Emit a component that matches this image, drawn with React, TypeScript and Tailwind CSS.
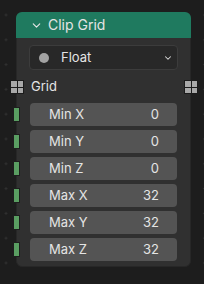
import { ChevronDown } from "lucide-react";

const fields = [
  { label: "Min X", value: "0" },
  { label: "Min Y", value: "0" },
  { label: "Min Z", value: "0" },
  { label: "Max X", value: "32" },
  { label: "Max Y", value: "32" },
  { label: "Max Z", value: "32" },
];

function GridSocket() {
  return (
    <div className="grid h-[14px] w-[14px] grid-cols-2 gap-px bg-[#1b1b1b] p-px">
      <span className="bg-[#a8a8a8]" />
      <span className="bg-[#a8a8a8]" />
      <span className="bg-[#a8a8a8]" />
      <span className="bg-[#a8a8a8]" />
    </div>
  );
}

export default function App() {
  return (
    <div className="h-[284px] w-[204px] bg-[#1d1d1d] bg-[radial-gradient(circle,#303030_1px,transparent_1.2px)] bg-[length:24.8px_24.8px] bg-[position:-6.4px_2.6px] pl-[16px] pt-[12px] font-['Inter','Liberation_Sans',sans-serif] text-[13px] text-[#e4e4e4]">
      <div className="w-[175px] rounded-[6px] border border-[#272727] bg-[#303030] pb-[5px]">
        <div className="-m-px flex h-[26px] items-center gap-[5px] rounded-t-[6px] bg-[#1f7a5f] pl-[14px] text-[14px]">
          <ChevronDown size={13} strokeWidth={2} className="text-[#e8e8e8]" />
          <span className="leading-none">Clip Grid</span>
        </div>

        <div className="mx-[12px] mt-[8px] flex h-[25px] items-center rounded-[4px] border border-[#3c3c3c] bg-[#282828] pl-[9px] pr-[4px]">
          <span className="h-[10px] w-[10px] rounded-full bg-[#a3a3a3]" />
          <span className="ml-[12px] flex-1">Float</span>
          <ChevronDown size={10} strokeWidth={2.5} className="text-[#dcdcdc]" />
        </div>

        <div className="relative mt-[9px] flex h-[16px] items-center pl-[14px]">
          <div className="absolute -left-[7px] top-px">
            <GridSocket />
          </div>
          <span>Grid</span>
          <div className="absolute -right-[8px] top-px">
            <GridSocket />
          </div>
        </div>

        <div className="mt-[8px] flex flex-col gap-[4px]">
          {fields.map((f) => (
            <div key={f.label} className="relative ml-[13px] mr-[13px] flex h-[23px] items-center rounded-[4px] bg-[#545454] pl-[19px] pr-[18px]">
              <span className="absolute -left-[17px] top-[4px] h-[15px] w-[7px] border border-[#1e1e1e] bg-[#5a9e62]" />
              <span className="flex-1">{f.label}</span>
              <span>{f.value}</span>
            </div>
          ))}
        </div>
      </div>
    </div>
  );
}
